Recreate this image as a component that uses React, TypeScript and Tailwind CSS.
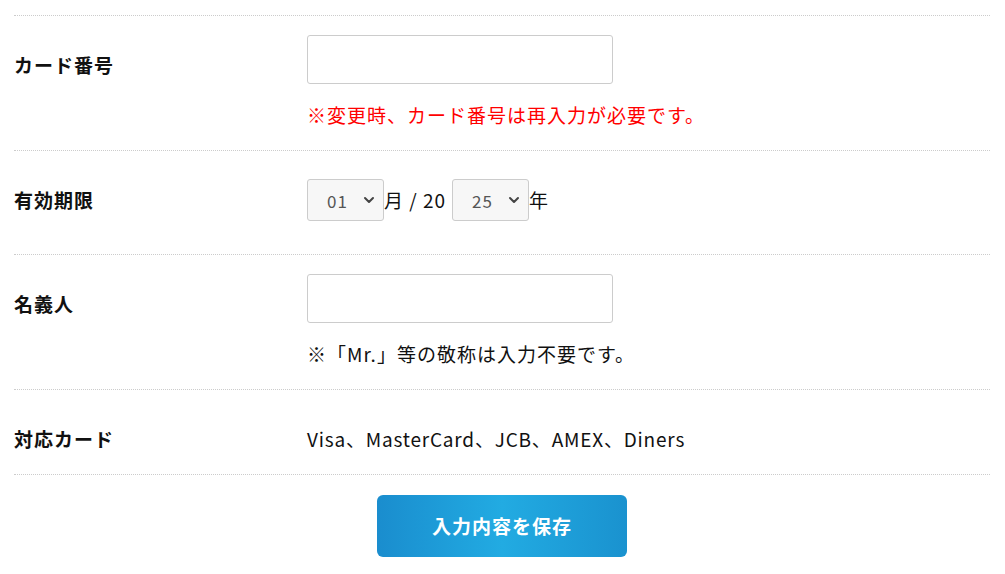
import React from 'react';

const font = { fontFamily: '"Noto Sans CJK JP", "Noto Sans", sans-serif' };

const Row = ({ label, children, last }: { label: string; children: React.ReactNode; last?: boolean }) => (
  <div className={`flex border-t border-dotted border-[#cccccc] pt-[19px] pb-[20px] ${last ? 'border-b' : ''}`}>
    <div className="w-[293px] shrink-0 pt-[15px] leading-[30px] text-[19px] font-bold tracking-[1px] text-[#111]">{label}</div>
    <div className="flex-1">{children}</div>
  </div>
);

const Select = ({ value }: { value: string }) => (
  <div className="relative h-[42px] w-[77px] rounded-[3px] border border-[#cccccc] bg-[#f7f7f7]">
    <span className="absolute left-[19px] top-[9px] text-[17px] leading-[24px] text-[#555]">{value}</span>
    <svg className="absolute right-[8px] top-[15px]" width="12" height="10" viewBox="0 0 12 10">
      <path d="M2 3l4 4 4-4" fill="none" stroke="#444" strokeWidth="2" strokeLinecap="round" strokeLinejoin="round" />
    </svg>
  </div>
);

const App = () => {
  return (
    <div className="bg-white min-h-[574px] pt-[15px] pl-[14px] pr-[15px]" style={font}>
      <Row label="カード番号">
        <div className="h-[49px] w-[306px] rounded-[3px] border border-[#cccccc] bg-white" />
        <p className="mt-[16px] text-[19px] leading-[30px] tracking-[1px] text-[#ff0000]">※変更時、カード番号は再入力が必要です。</p>
      </Row>
      <Row label="有効期限">
        <div className="flex items-center pt-[9px] pb-[13px] text-[19px] tracking-[1px] text-[#111]">
          <Select value="01" />
          <span>月 / 20</span>
          <span className="w-[6px]" />
          <Select value="25" />
          <span>年</span>
        </div>
      </Row>
      <Row label="名義人">
        <div className="h-[49px] w-[306px] rounded-[3px] border border-[#cccccc] bg-white" />
        <p className="mt-[16px] text-[19px] leading-[30px] tracking-[1px] text-[#111]">※「Mr.」等の敬称は入力不要です。</p>
      </Row>
      <Row label="対応カード" last>
        <p className="pt-[15px] text-[19px] leading-[30px] tracking-[0.8px] text-[#111]">Visa、MasterCard、JCB、AMEX、Diners</p>
      </Row>
      <div className="flex justify-center pt-[20px]">
        <button className="h-[62px] w-[250px] rounded-[6px] bg-gradient-to-r from-[#1a8dce] via-[#22abe2] to-[#1a92cf] text-[19px] font-bold tracking-[1px] text-white">
          入力内容を保存
        </button>
      </div>
    </div>
  );
};

export default App;
